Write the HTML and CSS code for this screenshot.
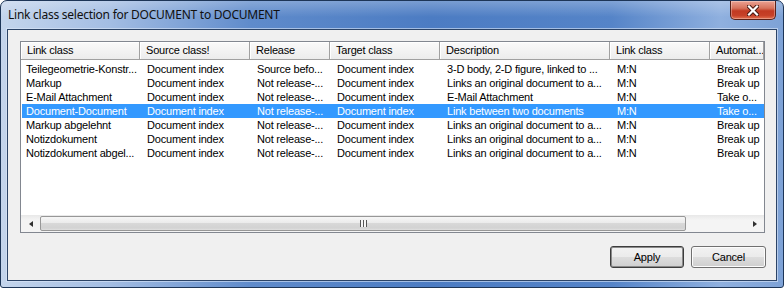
FILE: index.html
```html
<!DOCTYPE html>
<html lang="en">
<head>
    <meta charset="UTF-8">
    <title>Link class selection</title>
    <link rel="stylesheet" href="styles.css">
</head>
<body>
    <div class="window">
        <div class="titlebar">
            <span class="title">Link class selection for DOCUMENT to DOCUMENT</span>
            <div class="close">
                <svg width="12" height="11" viewBox="0 0 12 11">
                    <path d="M2 1.5 L10 9.5 M10 1.5 L2 9.5" stroke="#4a1a12" stroke-width="4.2" stroke-linecap="square"/>
                    <path d="M2 1.5 L10 9.5 M10 1.5 L2 9.5" stroke="#ffffff" stroke-width="2.2" stroke-linecap="square"/>
                </svg>
            </div>
        </div>

        <div class="client">
            <div class="listview">
                <div class="list-body">
                    <div class="row header">
                        <div class="cell">Link class</div>
                        <div class="cell">Source class!</div>
                        <div class="cell">Release</div>
                        <div class="cell">Target class</div>
                        <div class="cell">Description</div>
                        <div class="cell">Link class</div>
                        <div class="cell">Automat...</div>
                    </div>
                    <div class="rows">
                        <div class="row">
                            <div class="cell">Teilegeometrie-Konstr...</div>
                            <div class="cell">Document index</div>
                            <div class="cell">Source befo...</div>
                            <div class="cell">Document index</div>
                            <div class="cell">3-D body, 2-D figure, linked to ...</div>
                            <div class="cell">M:N</div>
                            <div class="cell">Break up</div>
                        </div>
                        <div class="row">
                            <div class="cell">Markup</div>
                            <div class="cell">Document index</div>
                            <div class="cell">Not release-...</div>
                            <div class="cell">Document index</div>
                            <div class="cell">Links an original document to a...</div>
                            <div class="cell">M:N</div>
                            <div class="cell">Break up</div>
                        </div>
                        <div class="row">
                            <div class="cell">E-Mail Attachment</div>
                            <div class="cell">Document index</div>
                            <div class="cell">Not release-...</div>
                            <div class="cell">Document index</div>
                            <div class="cell">E-Mail Attachment</div>
                            <div class="cell">M:N</div>
                            <div class="cell">Take o...</div>
                        </div>
                        <div class="row selected">
                            <div class="cell">Document-Document</div>
                            <div class="cell">Document index</div>
                            <div class="cell">Not release-...</div>
                            <div class="cell">Document index</div>
                            <div class="cell">Link between two documents</div>
                            <div class="cell">M:N</div>
                            <div class="cell">Take o...</div>
                        </div>
                        <div class="row">
                            <div class="cell">Markup abgelehnt</div>
                            <div class="cell">Document index</div>
                            <div class="cell">Not release-...</div>
                            <div class="cell">Document index</div>
                            <div class="cell">Links an original document to a...</div>
                            <div class="cell">M:N</div>
                            <div class="cell">Break up</div>
                        </div>
                        <div class="row">
                            <div class="cell">Notizdokument</div>
                            <div class="cell">Document index</div>
                            <div class="cell">Not release-...</div>
                            <div class="cell">Document index</div>
                            <div class="cell">Links an original document to a...</div>
                            <div class="cell">M:N</div>
                            <div class="cell">Break up</div>
                        </div>
                        <div class="row">
                            <div class="cell">Notizdokument abgel...</div>
                            <div class="cell">Document index</div>
                            <div class="cell">Not release-...</div>
                            <div class="cell">Document index</div>
                            <div class="cell">Links an original document to a...</div>
                            <div class="cell">M:N</div>
                            <div class="cell">Break up</div>
                        </div>
                    </div>
                </div>

                <!-- horizontal scrollbar -->
                <div class="hscroll">
                    <div class="arrow arrow-left"></div>
                    <div class="track">
                        <div class="thumb"><span class="grip"></span></div>
                    </div>
                    <div class="arrow arrow-right"></div>
                </div>
            </div>

            <div class="buttons">
                <button class="btn btn-default">Apply</button>
                <button class="btn">Cancel</button>
            </div>
        </div>
    </div>
</body>
</html>
```

FILE: styles.css
```css
* {
    margin: 0;
    padding: 0;
    box-sizing: border-box;
}

body {
    width: 784px;
    height: 288px;
    overflow: hidden;
    background: #ffffff;
    font-family: 'Liberation Sans', Arial, sans-serif;
    font-size: 11px;
    letter-spacing: -0.2px;
    color: #000;
}

.window {
    width: 784px;
    height: 288px;
    display: flex;
    flex-direction: column;
    padding: 0 6px 6px 6px;
    border: 1px solid #1d3557;
    border-radius: 7px 7px 3px 3px;
    background:
        linear-gradient(to bottom, rgba(255, 255, 255, 0.25), rgba(255, 255, 255, 0) 16px),
        linear-gradient(to right, #c4d5ec 0%, #a3bde3 14%, #5f8bcb 32%, #4c7cc3 55%, #5584c8 78%, #8fb0df 92%, #7ea2d6 100%);
}

.titlebar {
    height: 28px;
    display: flex;
    justify-content: space-between;
    align-items: flex-start;
}

.title {
    font-family: 'Noto Sans', 'Open Sans', sans-serif;
    font-size: 12px;
    letter-spacing: -0.25px;
    line-height: 14px;
    padding: 7px 0 0 1px;
    color: #101010;
}

.close {
    width: 46px;
    height: 19px;
    margin-right: 1px;
    display: flex;
    justify-content: center;
    align-items: center;
    border: 1px solid #5a2118;
    border-top: none;
    border-radius: 0 0 5px 5px;
    background: linear-gradient(to bottom, #eba293 0%, #d6725c 40%, #c23a22 55%, #c64128 80%, #e2704f 100%);
    box-shadow: inset 0 0 0 1px rgba(255, 255, 255, 0.3);
}

.client {
    flex: 1;
    display: flex;
    flex-direction: column;
    padding: 11px 10px 12px 12px;
    background: #f0f0f0;
    border: 1px solid #2c4467;
    box-shadow: 0 0 0 1px rgba(220, 232, 248, 0.6);
}

/* list view */

.listview {
    height: 192px;
    margin-right: 1px;
    display: flex;
    flex-direction: column;
    border: 1px solid #828790;
    background: #ffffff;
}

.list-body {
    flex: 1;
    overflow: hidden;
}

.row {
    display: grid;
    grid-template-columns: 119px 110px 80px 110px 170px 100px 54px;
    height: 14px;
    line-height: 14px;
    white-space: nowrap;
}

.cell {
    overflow: hidden;
    padding-left: 7px;
}

.row .cell:first-child {
    padding-left: 5px;
}

.row.header {
    height: 18px;
    line-height: 16px;
    border-bottom: 1px solid #a0a0a0;
}

.row.header .cell {
    padding-left: 6px;
    background: linear-gradient(to bottom, #fafafa, #ececec);
    border-right: 1px solid #a0a0a0;
    box-shadow: inset 1px 1px 0 #ffffff;
}

.rows {
    padding-top: 2px;
}

.row.selected {
    background: linear-gradient(to right, transparent 1px, #3399ff 1px);
    color: #ffffff;
}

/* scrollbar */

.hscroll {
    height: 17px;
    display: flex;
    background: linear-gradient(to bottom, #e8e8e8, #f4f4f4 30%, #f4f4f4);
}

.arrow {
    width: 19px;
    display: flex;
    justify-content: center;
    align-items: center;
}

.arrow::before {
    content: '';
    border-top: 3px solid transparent;
    border-bottom: 3px solid transparent;
}

.arrow-left::before {
    border-right: 4px solid #303030;
}

.arrow-right::before {
    border-left: 4px solid #303030;
}

.track {
    flex: 1;
    padding: 1px 59px 1px 0;
}

.thumb {
    height: 100%;
    display: flex;
    justify-content: center;
    align-items: center;
    border: 1px solid #979797;
    border-radius: 2px;
    background: linear-gradient(to bottom, #f6f6f6 0%, #ebebeb 45%, #d8d8d8 50%, #d2d2d2 85%, #e0e0e0 100%);
}

.grip {
    width: 7px;
    height: 7px;
    background: repeating-linear-gradient(to right, #555 0 1px, #f6f6f6 1px 3px);
}

/* buttons */

.buttons {
    display: flex;
    justify-content: flex-end;
    gap: 7px;
    margin-top: 13px;
}

.btn {
    width: 75px;
    height: 22px;
    font-family: 'Liberation Sans', Arial, sans-serif;
    font-size: 11px;
    letter-spacing: -0.2px;
    color: #000;
    border: 1px solid #707070;
    border-radius: 3px;
    background: linear-gradient(to bottom, #f2f2f2 0%, #ebebeb 50%, #dddddd 51%, #cfcfcf 100%);
    box-shadow: inset 0 0 0 1px #fcfcfc;
}

.btn-default {
    width: 74px;
    border-color: #3c3c3c;
    box-shadow: inset 0 0 0 1px #8a8a8a;
}
```
